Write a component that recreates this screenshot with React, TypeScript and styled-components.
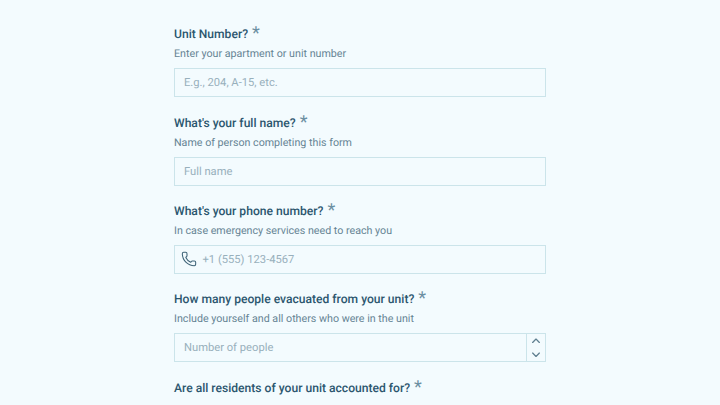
import React from "react";
import styled, { createGlobalStyle } from "styled-components";
import { Phone, ChevronUp, ChevronDown } from "lucide-react";

const Global = createGlobalStyle`
    html, body {
        margin: 0;
        height: 405px;
        overflow: hidden;
        background: #f3fbfe;
        text-rendering: geometricPrecision;
    }
`
const Form = styled.div`
    width: 372px;
    margin: 0 auto;
    padding-top: 24.2px;
    display: flex;
    flex-direction: column;
    gap: 15.33px;
    font-family: Roboto, sans-serif;
`
const Field = styled.div`
    display: flex;
    flex-direction: column;
`
const Title = styled.div`
    height: 20px;
    display: flex;
    align-items: center;
    gap: 4px;
    color: #2b566e;
    font-size: 12.1px;
    font-weight: 500;
`
const Star = styled.span`
    color: #6b8fa2;
    font-size: 18px;
    font-weight: 400;
    line-height: 18px;
`
const Hint = styled.div`
    height: 20px;
    line-height: 20px;
    color: #668494;
    font-size: 10.7px;
`
const InputBox = styled.div<{ $icon?: boolean }>`
    margin-top: 4px;
    height: 29px;
    box-sizing: border-box;
    border: 1px solid #cbe4ea;
    display: flex;
    align-items: center;
    padding-left: ${props => props.$icon ? "6px" : "9px"};
    gap: ${props => props.$icon ? "5.5px" : "0"};
    color: #98b0bc;
    font-size: 11.2px;
`
const Placeholder = styled.span`
    flex: 1;
`
const Spinner = styled.div`
    width: 18px;
    height: 100%;
    border-left: 1px solid #cbe4ea;
    display: flex;
    flex-direction: column;
    align-items: center;
    justify-content: center;
    color: #5f7f90;
`

export default function App() {
    return (
        <>
            <Global />
            <Form>
                <Field>
                    <Title>Unit Number? <Star>*</Star></Title>
                    <Hint>Enter your apartment or unit number</Hint>
                    <InputBox><Placeholder>E.g., 204, A-15, etc.</Placeholder></InputBox>
                </Field>
                <Field>
                    <Title>What's your full name? <Star>*</Star></Title>
                    <Hint>Name of person completing this form</Hint>
                    <InputBox><Placeholder>Full name</Placeholder></InputBox>
                </Field>
                <Field>
                    <Title>What's your phone number? <Star>*</Star></Title>
                    <Hint>In case emergency services need to reach you</Hint>
                    <InputBox $icon>
                        <Phone size={16} color="#3f6478" strokeWidth={1.6} />
                        <Placeholder>+1 (555) 123-4567</Placeholder>
                    </InputBox>
                </Field>
                <Field>
                    <Title>How many people evacuated from your unit? <Star>*</Star></Title>
                    <Hint>Include yourself and all others who were in the unit</Hint>
                    <InputBox>
                        <Placeholder>Number of people</Placeholder>
                        <Spinner>
                            <ChevronUp size={14} strokeWidth={2.2} />
                            <ChevronDown size={14} strokeWidth={2.2} />
                        </Spinner>
                    </InputBox>
                </Field>
                <Field>
                    <Title>Are all residents of your unit accounted for? <Star>*</Star></Title>
                </Field>
            </Form>
        </>
    );
}
